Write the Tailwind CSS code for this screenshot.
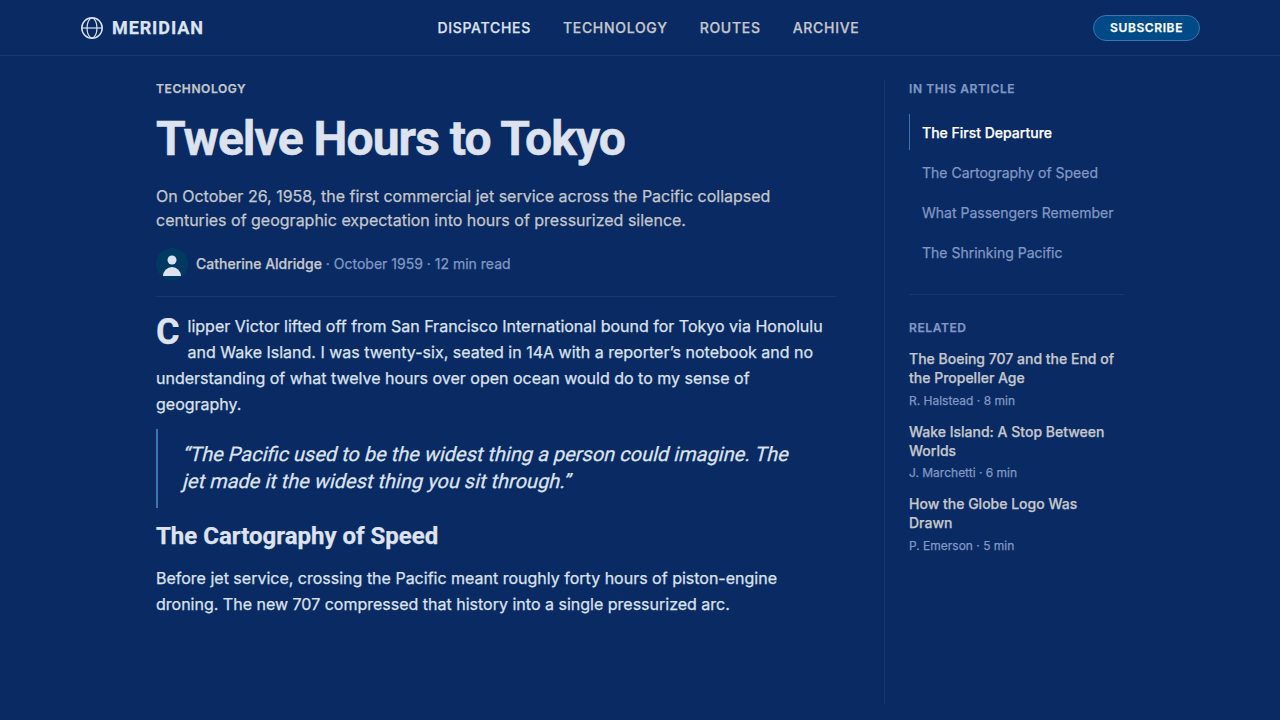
<!DOCTYPE html>
<html lang="en">
<head>
<meta charset="utf-8">
<title>Twelve Hours to Tokyo</title>
<script src="https://cdn.jsdelivr.net/npm/@tailwindcss/browser@4"></script>
</head>
<body class="h-[720px] overflow-hidden bg-[#0a2a63] font-['Inter',sans-serif] text-[#dce3ef] [-webkit-text-stroke:0.25px]">
<header class="flex h-14 items-center justify-between border-b border-[#16376f] px-20">
  <a class="flex items-center gap-2 font-['Roboto',sans-serif] text-lg font-bold tracking-[0.05em]">
    <svg class="size-6" viewBox="0 0 24 24" fill="none" stroke="currentColor"><circle cx="12" cy="12" r="10.2" stroke-width="1.5"/><ellipse cx="12" cy="12" rx="5" ry="10" stroke-width="1.2"/><path d="M2 12h20" stroke-width="1.2"/></svg>
    <span>MERIDIAN</span>
  </a>
  <nav class="flex gap-8 text-sm font-medium tracking-[0.05em] text-[#c4c8cc]">
    <a class="text-[#dce3ef]">DISPATCHES</a><a>TECHNOLOGY</a><a>ROUTES</a><a>ARCHIVE</a>
  </nav>
  <button class="h-[26px] rounded-full border border-[#3b76ac] bg-[#004b87] px-4 text-xs font-semibold tracking-[0.05em] text-white">SUBSCRIBE</button>
</header>
<div class="mx-auto flex h-[664px] w-[968px] gap-12 pt-6 pb-4">
  <main class="w-[680px]">
    <p class="text-xs leading-[18px] font-semibold tracking-[0.05em] text-[#c4c8cc]">TECHNOLOGY</p>
    <h1 class="mt-3.5 font-['Roboto',sans-serif] text-5xl leading-[53px] font-bold tracking-[-0.02em] [-webkit-text-stroke:0.5px]">Twelve Hours to Tokyo</h1>
    <p class="mt-[19px] max-w-[640px] leading-6 text-[#c4c8cc]">On October 26, 1958, the first commercial jet service across the Pacific collapsed centuries of geographic expectation into hours of pressurized silence.</p>
    <div class="mt-4 flex h-[49px] items-start gap-2 border-b border-[#16376f] text-sm leading-8 text-[#8198c4]">
      <svg class="size-8" viewBox="0 0 32 32"><circle cx="16" cy="16" r="16" fill="#003a63"/><circle cx="16" cy="12" r="4.5" fill="#dce3ef"/><path d="M7 28a9 9 0 0 1 18 0z" fill="#dce3ef"/></svg>
      <p><span class="font-medium text-[#c4c8cc]">Catherine Aldridge</span> · October 1959 · 12 min read</p>
    </div>
    <p class="mt-4 leading-[26px]"><span class="float-left pt-px pr-2 font-['Roboto',sans-serif] text-4xl leading-9 font-bold">C</span>lipper Victor lifted off from San Francisco International bound for Tokyo via Honolulu and Wake Island. I was twenty-six, seated in 14A with a reporter’s notebook and no understanding of what twelve hours over open ocean would do to my sense of geography.</p>
    <blockquote class="mt-3 h-[79px] border-l-2 border-[#3b76ac] py-3 pl-6 font-['Roboto',sans-serif] text-xl leading-[27px] whitespace-nowrap">
      <span class="block origin-[0_20px] -skew-x-[14deg]">“The Pacific used to be the widest thing a person could imagine. The</span>
      <span class="block origin-[0_20px] -skew-x-[14deg]">jet made it the widest thing you sit through.”</span>
    </blockquote>
    <h2 class="mt-3 font-['Roboto',sans-serif] text-2xl leading-8 font-bold">The Cartography of Speed</h2>
    <p class="mt-[13px] leading-[26px]">Before jet service, crossing the Pacific meant roughly forty hours of piston-engine droning. The new 707 compressed that history into a single pressurized arc.</p>
  </main>
  <aside class="w-60 border-l border-[#16376f] pl-6 text-[#8198c4]">
    <h3 class="text-xs leading-[18px] font-semibold tracking-[0.05em]">IN THIS ARTICLE</h3>
    <ul class="mt-4 flex flex-col gap-1 border-b border-[#16376f] pb-6 text-sm leading-[20px] *:border-l *:pt-[9px] *:pb-[7px] *:pl-3">
      <li class="border-[#3b76ac] font-medium text-white">The First Departure</li>
      <li class="border-transparent">The Cartography of Speed</li>
      <li class="border-transparent">What Passengers Remember</li>
      <li class="border-transparent">The Shrinking Pacific</li>
    </ul>
    <h3 class="mt-6 text-xs leading-[18px] font-semibold tracking-[0.05em]">RELATED</h3>
    <div class="mt-3 flex flex-col gap-3">
      <article><h4 class="pt-px text-sm leading-[18.9px] font-medium text-[#c4c8cc]">The Boeing 707 and the End of the Propeller Age</h4><p class="mt-[3.8px] text-xs leading-[18px]">R. Halstead · 8 min</p></article>
      <article><h4 class="pt-px text-sm leading-[18.9px] font-medium text-[#c4c8cc]">Wake Island: A Stop Between Worlds</h4><p class="mt-[3.8px] text-xs leading-[18px]">J. Marchetti · 6 min</p></article>
      <article><h4 class="pt-px text-sm leading-[18.9px] font-medium text-[#c4c8cc]">How the Globe Logo Was Drawn</h4><p class="mt-[3.8px] text-xs leading-[18px]">P. Emerson · 5 min</p></article>
    </div>
  </aside>
</div>
</body>
</html>
